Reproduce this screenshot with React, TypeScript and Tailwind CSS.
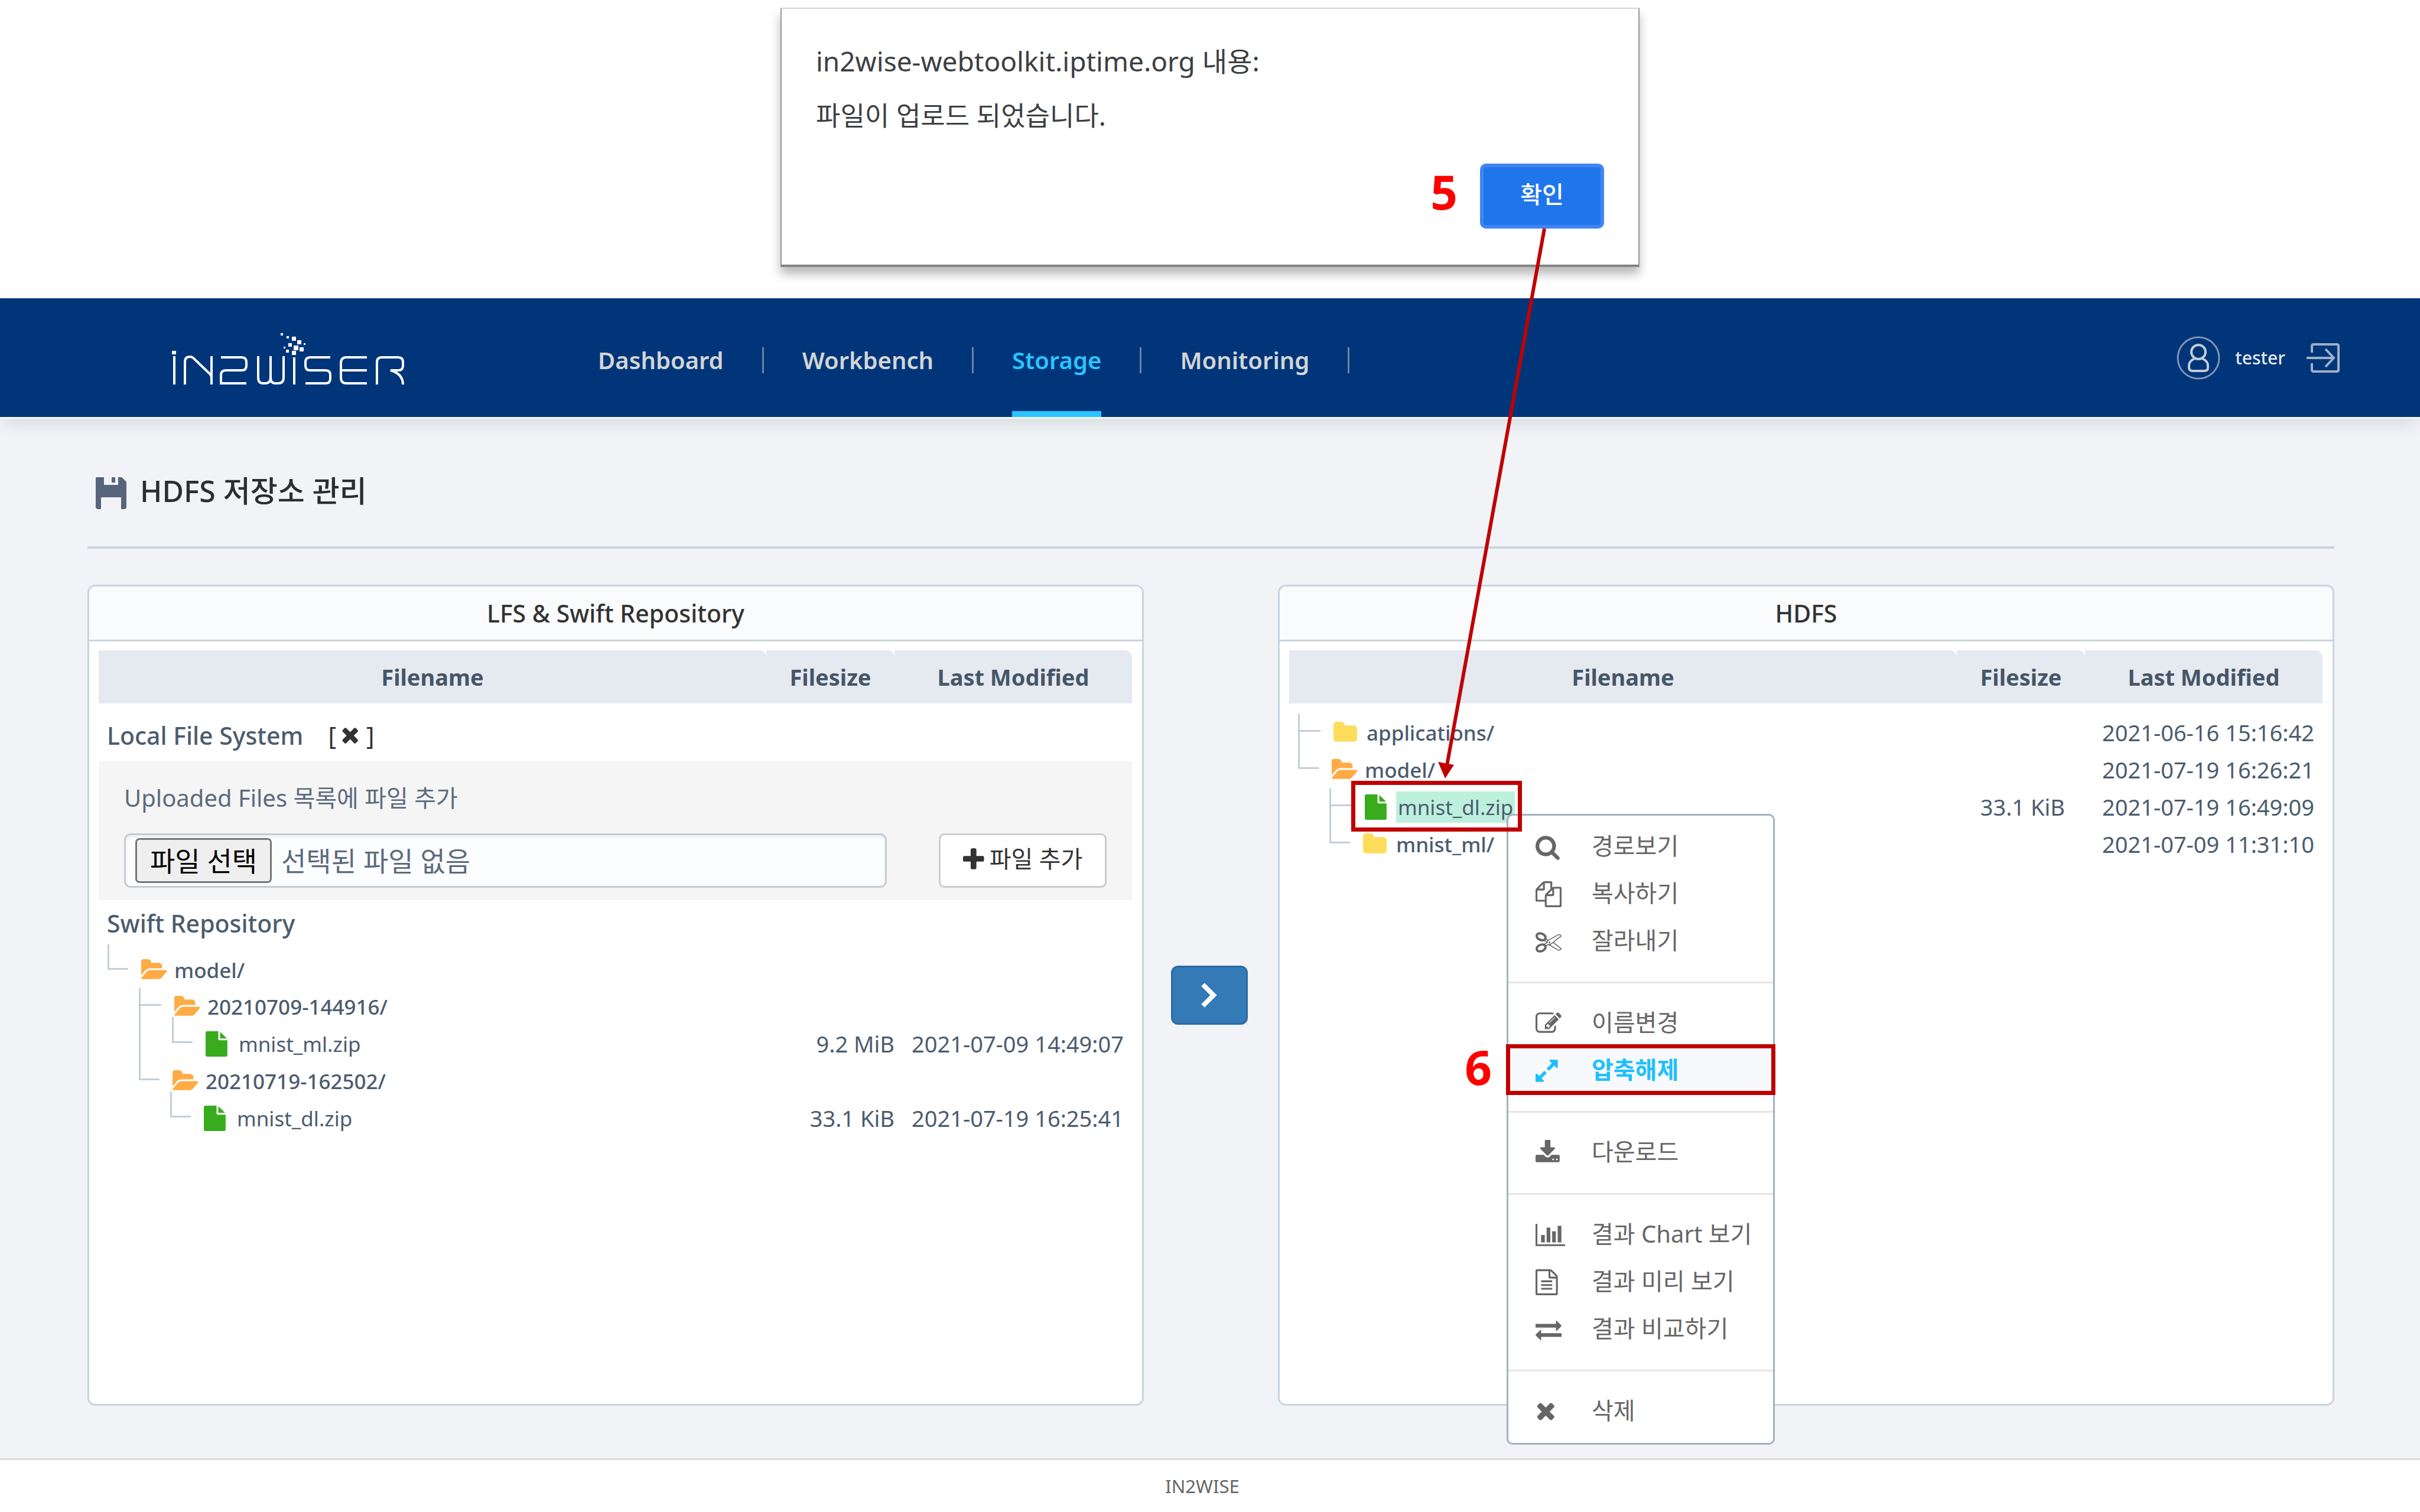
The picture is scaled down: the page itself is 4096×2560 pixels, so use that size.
import type { ReactNode } from 'react';

type Glyph = { d: string; box?: string };

const glyphs = {
  search: {
    d: 'M1216 832q0-185-131.5-316.5t-316.5-131.5-316.5 131.5-131.5 316.5 131.5 316.5 316.5 131.5 316.5-131.5 131.5-316.5zm512 832q0 52-38 90t-90 38q-54 0-90-38l-343-342q-179 124-399 124-143 0-273.5-55.5t-225-150-150-225-55.5-273.5 55.5-273.5 150-225 225-150 273.5-55.5 273.5 55.5 225 150 150 225 55.5 273.5q0 220-124 399l343 343q37 37 37 90z',
    box: '64 0 1792 1792',
  },
  copy: {
    d: 'M1696 384q40 0 68 28t28 68v1216q0 40-28 68t-68 28h-960q-40 0-68-28t-28-68v-288h-544q-40 0-68-28t-28-68v-672q0-40 20-88t48-76l408-408q28-28 76-48t88-20h416q40 0 68 28t28 68v328q68-40 128-40h416zm-544 213l-299 299h299v-299zm-640-384l-299 299h299v-299zm196 647l316-316v-416h-384v416q0 40-28 68t-68 28h-416v640h512v-256q0-40 20-88t48-76zm956 804v-1152h-384v416q0 40-28 68t-68 28h-416v640h896z',
  },
  cut: {
    d: 'M960 896q26 0 45 19t19 45-19 45-45 19-45-19-19-45 19-45 45-19zm300 64l507 398q28 20 25 56-5 35-35 51l-128 64q-13 7-29 7-17 0-31-8l-690-387-110 66q-8 4-12 5 14 49 10 97-7 77-56 147.5t-132 123.5q-132 84-277 84-136 0-222-78-90-84-79-207 7-76 56-147t131-124q132-84 278-84 83 0 151 31 9-13 22-22l122-73-122-73q-13-9-22-22-68 31-151 31-146 0-278-84-82-53-131-124t-56-147q-5-59 15.5-113t63.5-93q85-79 222-79 145 0 277 84 83 52 132 123t56 148q4 48-10 97 4 1 12 5l110 66 690-387q14-8 31-8 16 0 29 7l128 64q30 16 35 51 3 36-25 56zm-681-260q46-42 21-108t-106-117q-92-59-192-59-74 0-113 36-46 42-21 108t106 117q92 59 192 59 74 0 113-36zm-85 745q81-51 106-117t-21-108q-39-36-113-36-100 0-192 59-81 51-106 117t21 108q39 36 113 36 100 0 192-59zm178-613l96 58v-11q0-36 33-56l14-8-79-44-26 26q-3 3-10 11t-12 12q-2 2-4 3.5t-3 2.5zm224 224l96 32 736-576-128-64-768 431v113l-160 96 9 8q2 2 7 6 4 4 11 12t11 12l26 26zm704 416l128-64-520-408-177 138q-2 3-13 7z',
  },
  edit: {
    d: 'M888 1184l116-116-152-152-116 116v56h96v96h56zm440-720q-16-16-33 1l-350 350q-17 17-1 33t33-1l350-350q17-17 1-33zm80 594v190q0 119-84.5 203.5t-203.5 84.5h-832q-119 0-203.5-84.5t-84.5-203.5v-832q0-119 84.5-203.5t203.5-84.5h832q63 0 117 25 15 7 18 23 3 17-9 29l-49 49q-14 14-32 8-23-6-45-6h-832q-66 0-113 47t-47 113v832q0 66 47 113t113 47h832q66 0 113-47t47-113v-126q0-13 9-22l64-64q15-15 35-7t20 29zm-96-738l288 288-672 672h-288v-288zm444 132l-92 92-288-288 92-92q28-28 68-28t68 28l152 152q28 28 28 68t-28 68z',
  },
  expand: {
    d: 'M883 1056q0 13-10 23l-332 332 144 144q19 19 19 45t-19 45-45 19h-448q-26 0-45-19t-19-45v-448q0-26 19-45t45-19 45 19l144 144 332-332q10-10 23-10t23 10l114 114q10 10 10 23zm781-864v448q0 26-19 45t-45 19-45-19l-144-144-332 332q-10 10-23 10t-23-10l-114-114q-10-10-10-23t10-23l332-332-144-144q-19-19-19-45t19-45 45-19h448q26 0 45 19t19 45z',
    box: '128 0 1792 1792',
  },
  download: {
    d: 'M1344 1344q0-26-19-45t-45-19-45 19-19 45 19 45 45 19 45-19 19-45zm256 0q0-26-19-45t-45-19-45 19-19 45 19 45 45 19 45-19 19-45zm128-224v320q0 40-28 68t-68 28h-1472q-40 0-68-28t-28-68v-320q0-40 28-68t68-28h465l135 136q58 56 136 56t136-56l136-136h464q40 0 68 28t28 68zm-325-569q17 41-14 70l-448 448q-18 19-45 19t-45-19l-448-448q-31-29-14-70 17-39 59-39h256v-448q0-26 19-45t45-19h256q26 0 45 19t19 45v448h256q42 0 59 39z',
    box: '64 0 1792 1792',
  },
  chart: {
    d: 'M640 896v512h-256v-512h256zm384-512v1024h-256v-1024h256zm1024 1152v128h-2048v-1536h128v1408h1920zm-640-896v768h-256v-768h256zm384-384v1152h-256v-1152h256z',
    box: '0 0 2048 1792',
  },
  document: {
    d: 'M1596 380q28 28 48 76t20 88v1152q0 40-28 68t-68 28h-1344q-40 0-68-28t-28-68v-1600q0-40 28-68t68-28h896q40 0 88 20t76 48zm-444-244v376h376q-10-29-22-41l-313-313q-12-12-41-22zm384 1528v-1024h-416q-40 0-68-28t-28-68v-416h-768v1536h1280zm-1024-864q0-14 9-23t23-9h704q14 0 23 9t9 23v64q0 14-9 23t-23 9h-704q-14 0-23-9t-9-23v-64zm736 224q14 0 23 9t9 23v64q0 14-9 23t-23 9h-704q-14 0-23-9t-9-23v-64q0-14 9-23t23-9h704zm0 256q14 0 23 9t9 23v64q0 14-9 23t-23 9h-704q-14 0-23-9t-9-23v-64q0-14 9-23t23-9h704z',
    box: '128 0 1792 1792',
  },
  exchange: {
    d: 'M1792 1184v192q0 13-9.5 22.5t-22.5 9.5h-1376v192q0 13-9.5 22.5t-22.5 9.5q-12 0-24-10l-319-320q-9-9-9-22 0-14 9-23l320-320q9-9 23-9 13 0 22.5 9.5t9.5 22.5v192h1376q13 0 22.5 9.5t9.5 22.5zm0-544q0 14-9 23l-320 320q-9 9-23 9-13 0-22.5-9.5t-9.5-22.5v-192h-1376q-13 0-22.5-9.5t-9.5-22.5v-192q0-13 9.5-22.5t22.5-9.5h1376v-192q0-14 9-23t23-9q12 0 24 10l319 319q9 9 9 23z',
  },
  times: {
    d: 'M1490 1322q0 40-28 68l-136 136q-28 28-68 28t-68-28l-294-294-294 294q-28 28-68 28t-68-28l-136-136q-28-28-28-68t28-68l294-294-294-294q-28-28-28-68t28-68l136-136q28-28 68-28t68 28l294 294 294-294q28-28 68-28t68 28l136 136q28 28 28 68t-28 68l-294 294 294 294q28 28 28 68z',
    box: '192 64 1792 1792',
  },
  plus: {
    d: 'M1600 736v192q0 40-28 68t-68 28h-416v416q0 40-28 68t-68 28h-192q-40 0-68-28t-28-68v-416h-416q-40 0-68-28t-28-68v-192q0-40 28-68t68-28h416v-416q0-40 28-68t68-28h192q40 0 68 28t28 68v416h416q40 0 68 28t28 68z',
    box: '192 0 1408 1664',
  },
  folder: {
    d: 'M1728 608v704q0 92-66 158t-158 66h-1216q-92 0-158-66t-66-158v-960q0-92 66-158t158-66h320q92 0 158 66t66 158v32h672q92 0 158 66t66 158z',
    box: '64 0 1856 1792',
  },
  folderOpen: {
    d: 'M1815 952q0 31-31 66l-336 396q-43 51-120.5 86.5t-143.5 35.5h-1088q-34 0-60.5-13t-26.5-43q0-31 31-66l336-396q43-51 120.5-86.5t143.5-35.5h1088q34 0 60.5 13t26.5 43zm-343-344v160h-832q-94 0-197 47.5t-164 119.5l-337 396-5 6q0-4-.5-12.5t-.5-12.5v-960q0-92 66-158t158-66h320q92 0 158 66t66 158v32h544q92 0 158 66t66 158z',
    box: '0 0 1856 1792',
  },
  file: {
    d: 'M1152 512v-472q22 14 36 28l408 408q14 14 28 36h-472zm-128 32q0 40 28 68t68 28h544v1056q0 40-28 68t-68 28h-1344q-40 0-68-28t-28-68v-1600q0-40 28-68t68-28h800v544z',
    box: '128 0 1792 1792',
  },
} satisfies Record<string, Glyph>;

type GlyphName = keyof typeof glyphs;

function Icon({ name, className }: { name: GlyphName; className: string }) {
  const glyph: Glyph = glyphs[name];
  return (
    <svg aria-hidden="true" viewBox={glyph.box ?? '0 0 1792 1792'} fill="currentColor" preserveAspectRatio="xMinYMid meet" className={className}>
      <path d={glyph.d} />
    </svg>
  );
}

function Logo() {
  const dots = [
    [184, 1, 4], [194, 6, 4], [203, 7, 7], [212, 13, 7], [197, 18, 6], [223, 18, 3],
    [206, 22, 8], [216, 25, 7], [189, 24, 3], [193, 29, 5], [203, 31, 7],
  ];
  return (
    <svg role="img" aria-label="IN2WISER" viewBox="0 0 393 90" className="h-[90px] w-[393px] shrink-0">
      <g fill="none" stroke="#fff" strokeWidth="4">
        <path d="M4 40V88" />
        <path d="M22 88V50Q22 41 30 41Q35 41 38 45L62 68Q67 72 67 77M67 40V88" />
        <path d="M83 42H118Q126 42 126 50V56Q126 64 118 64H91Q83 64 83 72V86H126" />
        <path d="M146 40V76Q146 86 154 86H158Q167 86 167 76V40M167 76Q167 86 175 86H180Q189 86 189 76V40" />
        <path d="M207 42V88" />
        <path d="M268 42H234Q226 42 226 50V56Q226 64 234 64H260Q268 64 268 72V78Q268 86 260 86H226" />
        <path d="M330 42H295Q286 42 286 52V76Q286 86 295 86H330M286 64H330" />
        <path d="M347 88V50Q347 42 355 42H383Q391 42 391 50V56Q391 64 383 64H370Q391 70 391 88" />
      </g>
      <g fill="#fff">
        <rect x="0" y="31" width="7" height="6" />
        {dots.map(([x, y, s]) => (
          <rect key={`${x}-${y}`} x={x} y={y} width={s} height={s} />
        ))}
      </g>
    </svg>
  );
}

function UserIcon() {
  return (
    <svg aria-hidden="true" viewBox="0 0 74 74" fill="none" className="size-[74px]">
      <circle cx="37" cy="37" r="35" stroke="#8095b3" strokeWidth="3" />
      <g stroke="#c3ccd6" strokeWidth="4">
        <circle cx="37" cy="27" r="12" />
        <path d="M31 38Q21 42 21 50V53Q21 59 27 59H47Q53 59 53 53V50Q53 42 43 38" />
      </g>
    </svg>
  );
}

function LogoutIcon() {
  return (
    <svg aria-hidden="true" viewBox="0 0 56 50" fill="none" stroke="#9fb0c6" strokeWidth="4" className="h-[50px] w-[56px]">
      <path d="M9 16V5Q9 2 12 2H51Q54 2 54 5V45Q54 48 51 48H12Q9 48 9 45V34" />
      <path d="M0 25H45M32 10L46 25L32 40" />
    </svg>
  );
}

function SaveIcon() {
  return (
    <svg aria-hidden="true" viewBox="0 0 52 54" className="h-[54px] w-[52px]">
      <path fill="#57657c" d="M2 0H14V13H38V0H44L52 8V50Q52 54 48 54H43V34H9V54H4Q0 54 0 50V2Q0 0 2 0Z" />
      <rect x="27" y="0" width="6" height="9" fill="#57657c" />
    </svg>
  );
}

function Alert() {
  return (
    <section className="flex justify-center bg-white pt-[13px] pb-[53px]">
      <div
        role="alertdialog"
        aria-label="업로드 결과"
        className="flex w-[1454px] flex-col border-2 border-t-[#d5d5d5] border-r-[#9a9a9a] border-b-4 border-b-[#858585] border-l-[#9a9a9a] bg-white pt-[55px] pr-[58px] pb-[61px] pl-[58px] shadow-[0_12px_16px_rgba(0,0,0,0.28)]"
      >
        <h2 className="text-[46px] leading-[66px] text-[#3c4043]">in2wise-webtoolkit.iptime.org 내용:</h2>
        <p className="mt-[27px] text-[45px] leading-[66px] text-[#3c4043]">파일이 업로드 되었습니다.</p>
        <div className="mt-[48px] flex items-center justify-end gap-[38px]">
          <span className="pb-4 text-[80px] leading-[90px] font-bold text-[#ff0000]">5</span>
          <button type="button" className="h-[110px] w-[210px] rounded-[10px] border-[6px] border-[#4285f4] bg-[#1f76ea] pb-[6px] text-[40px] leading-[60px] font-medium text-white">
            확인
          </button>
        </div>
      </div>
    </section>
  );
}

function Header() {
  const items = ['Dashboard', 'Workbench', 'Storage', 'Monitoring'];
  return (
    <header className="relative flex h-[204px] items-stretch border-b-[3px] border-[#f7f7f8] bg-[#00357a] pr-[136px] pl-[291px] shadow-[0_14px_26px_-6px_rgba(60,80,70,0.14)]">
      <a href="#home" className="flex items-center pt-1">
        <Logo />
      </a>
      <nav className="ml-[328px] flex items-stretch">
        {items.map((item) => (
          <div key={item} className="flex items-stretch">
            <a
              href={`#${item.toLowerCase()}`}
              className={
                item === 'Storage'
                  ? 'flex items-center border-b-[10px] border-[#29c5ff] pt-[18px] text-[40px] leading-[60px] font-semibold text-[#29c5ff]'
                  : 'flex items-center pt-2 text-[40px] leading-[60px] font-semibold text-[#d3d5d4]'
              }
            >
              {item}
            </a>
            <span className="mx-[65px] mt-2 h-[44px] w-[3px] self-center bg-[#71819b]" />
          </div>
        ))}
      </nav>
      <div className="ml-auto flex items-center">
        <UserIcon />
        <span className="ml-[25px] text-[30px] leading-[48px] font-medium text-[#e4e8ec]">tester</span>
        <button type="button" aria-label="로그아웃" className="ml-[36px]">
          <LogoutIcon />
        </button>
      </div>
    </header>
  );
}

type Guide = 'elbow' | 'drop' | 'tee' | 'line' | 'blank';

const guideWidth: Record<Guide, string> = {
  elbow: 'w-[57px]',
  drop: 'w-[57px]',
  tee: 'w-[60px]',
  line: 'w-[56px]',
  blank: 'w-[53px]',
};

const guideStem: Record<Guide, string> = {
  elbow: 'h-[30px] w-[35px] border-b-[3px] border-l-[3px]',
  drop: '-mt-[14px] h-[44px] w-[35px] border-b-[3px] border-l-[3px]',
  tee: 'h-[30px] w-[38px] border-b-[3px] border-l-[3px]',
  line: 'h-full border-l-[3px]',
  blank: 'hidden',
};

function TreeGuide({ kind }: { kind: Guide }) {
  return (
    <span className={`flex shrink-0 flex-col ${guideWidth[kind]}`}>
      <span className={`shrink-0 border-[#c3ced9] ${guideStem[kind]}`} />
      {kind === 'tee' && <span className="flex-1 border-l-[3px] border-[#c3ced9]" />}
    </span>
  );
}

type Entry = {
  guides: Guide[];
  kind: 'folder' | 'folderOpen' | 'file';
  name: string;
  size?: string;
  modified?: string;
  menu?: boolean;
};

const kindColor = { folder: 'text-[#ffdc5c]', folderOpen: 'text-[#ffab45]', file: 'text-[#38ac1c]' };

function EntryRow({ entry, sizePad, first }: { entry: Entry; sizePad: string; first?: boolean }) {
  return (
    <tr className="text-[38px] leading-[63px] text-[#4b5c6e]">
      <td className="p-0">
        <div className={first ? 'flex h-[74px] pl-[15px]' : 'flex h-[63px] pl-[15px]'}>
          {first ? (
            <span className="w-[57px] shrink-0">
              <span className="block h-[43px] w-[35px] border-b-[3px] border-l-[3px] border-[#c3ced9]" />
            </span>
          ) : (
            entry.guides.map((g, i) => <TreeGuide key={i} kind={g} />)
          )}
          <span className={first ? 'flex items-center pt-3' : 'flex items-center'}>
            <Icon name={entry.kind} className={`h-[43px] w-[45px] shrink-0 ${kindColor[entry.kind]}`} />
            {entry.menu ? (
              <span className="relative ml-[8px] bg-[#bdf0dc] px-[3px] text-[35px] leading-[53px] whitespace-nowrap">
                {entry.name}
                <ContextMenu />
                <span className="pointer-events-none absolute -top-[18px] -right-[12px] -bottom-[15px] -left-[76px] border-[7px] border-[#c00000]" />
              </span>
            ) : (
              <span
                className={
                  entry.kind === 'file'
                    ? 'ml-[11px] text-[35px] whitespace-nowrap'
                    : 'ml-[11px] text-[35px] font-medium whitespace-nowrap'
                }
              >
                {entry.name}
              </span>
            )}
          </span>
        </div>
      </td>
      <td className={`p-0 text-right whitespace-nowrap ${sizePad}`}>{entry.size}</td>
      <td className="p-0 pr-[14px] text-right whitespace-nowrap">{entry.modified}</td>
    </tr>
  );
}

const menuGroups: { icon: GlyphName; label: string }[][] = [
  [
    { icon: 'search', label: '경로보기' },
    { icon: 'copy', label: '복사하기' },
    { icon: 'cut', label: '잘라내기' },
  ],
  [
    { icon: 'edit', label: '이름변경' },
    { icon: 'expand', label: '압축해제' },
  ],
  [{ icon: 'download', label: '다운로드' }],
  [
    { icon: 'chart', label: '결과 Chart 보기' },
    { icon: 'document', label: '결과 미리 보기' },
    { icon: 'exchange', label: '결과 비교하기' },
  ],
  [{ icon: 'times', label: '삭제' }],
];

function MenuItem({ icon, label }: { icon: GlyphName; label: string }) {
  const active = icon === 'expand';
  return (
    <li role="none" className="relative">
      <button
        type="button"
        role="menuitem"
        className={
          active
            ? 'flex h-[80px] w-full items-center bg-[#f8f9fc] pl-[46px] text-[40px] leading-[60px] font-bold text-[#1fbfff]'
            : 'flex h-[80px] w-full items-center pl-[46px] text-[40px] leading-[60px] text-[#666]'
        }
      >
        <span className="w-[95px] pt-[3px]">
          <Icon name={icon} className={icon === 'chart' ? 'h-[44px] w-[50px]' : 'size-[44px]'} />
        </span>
        {label}
      </button>
      {active && (
        <>
          <span className="pointer-events-none absolute -inset-x-[4px] -inset-y-[3px] border-[7px] border-[#c00000]" />
          <span className="absolute -top-[10px] right-full mr-[28px] text-[80px] leading-[90px] font-bold text-[#ff0000]">6</span>
        </>
      )}
    </li>
  );
}

function ContextMenu() {
  return (
    <div role="menu" className="absolute top-[38px] left-[187px] w-[454px] rounded-[10px] border-[3px] border-[#a5b1bf] bg-white pt-[11px] pb-[15px] text-left">
      {menuGroups.map((group, i) => (
        <ul key={group[0].label} role="group">
          {i > 0 && <li role="separator" className="mt-[30px] mb-[26px] h-[3px] bg-[#e5e5e5]" />}
          {group.map((item) => (
            <MenuItem key={item.label} {...item} />
          ))}
        </ul>
      ))}
    </div>
  );
}

function Panel({ title, children }: { title: string; children: ReactNode }) {
  return (
    <section className="min-w-0 flex-1 rounded-[13px] border-[3px] border-[#cad4df] bg-white">
      <h2 className="rounded-t-[10px] border-b-[3px] border-[#cad4df] bg-[#fafbfd] text-center text-[41px] leading-[90px] font-medium text-[#333]">{title}</h2>
      <div className="pt-[15px] pr-[17px] pl-[16px]">
        <table className="w-full table-fixed border-separate border-spacing-0">
          <colgroup>
            <col />
            <col className="w-[217px]" />
            <col className="w-[402px]" />
          </colgroup>
          <thead>
            <tr className="text-[38px] leading-[90px] text-[#455668]">
              <th className="rounded-tr-[12px] bg-[#e5e9f0] p-0 font-bold">Filename</th>
              <th className="rounded-tr-[12px] bg-[#e5e9f0] p-0 font-bold">Filesize</th>
              <th className="rounded-tr-[12px] bg-[#e5e9f0] p-0 font-bold">Last Modified</th>
            </tr>
          </thead>
          {children}
        </table>
      </div>
    </section>
  );
}

const swiftEntries: Entry[] = [
  { guides: ['elbow'], kind: 'folderOpen', name: 'model/' },
  { guides: ['blank', 'tee'], kind: 'folderOpen', name: '20210709-144916/' },
  { guides: ['blank', 'line', 'drop'], kind: 'file', name: 'mnist_ml.zip', size: '9.2 MiB', modified: '2021-07-09 14:49:07' },
  { guides: ['blank', 'elbow'], kind: 'folderOpen', name: '20210719-162502/' },
  { guides: ['blank', 'blank', 'drop'], kind: 'file', name: 'mnist_dl.zip', size: '33.1 KiB', modified: '2021-07-19 16:25:41' },
];

const hdfsEntries: Entry[] = [
  { guides: ['tee'], kind: 'folder', name: 'applications/', modified: '2021-06-16 15:16:42' },
  { guides: ['elbow'], kind: 'folderOpen', name: 'model/', modified: '2021-07-19 16:26:21' },
  { guides: ['blank', 'tee'], kind: 'file', name: 'mnist_dl.zip', size: '33.1 KiB', modified: '2021-07-19 16:49:09', menu: true },
  { guides: ['blank', 'elbow'], kind: 'folder', name: 'mnist_ml/', modified: '2021-07-09 11:31:10' },
];

function LocalPanel() {
  return (
    <Panel title="LFS & Swift Repository">
      <tbody>
        <tr>
          <td colSpan={3} className="p-0">
            <div className="flex h-[98px] items-center pt-[10px] pl-[14px] text-[41px] leading-[60px] text-[#4b5c6e]">
              <h3 className="font-medium">Local File System</h3>
              <button type="button" aria-label="닫기" className="ml-[42px] flex items-center text-[#333]">
                [<Icon name="times" className="mr-[3px] ml-[8px] h-[43px] w-[40px]" />]
              </button>
            </div>
            <div className="bg-[#f5f5f5] px-[43px] pt-[30px] pb-[21px] text-[#5c6b7e]">
              <p className="text-[40px] leading-[64px]">Uploaded Files 목록에 파일 추가</p>
              <div className="mt-[28px] flex gap-[88px]">
                <div className="flex h-[92px] flex-1 items-center rounded-[11px] border-[3px] border-[#c5cccf] bg-[#fcfdff] pl-[16px] shadow-[inset_0_4px_4px_rgba(0,0,0,0.06)]">
                  <input id="upload" type="file" className="sr-only" />
                  <label htmlFor="upload" className="flex items-center text-[46px] leading-[66px]">
                    <span className="flex h-[76px] w-[231px] items-center justify-center rounded-[7px] border-[3px] border-[#767676] bg-[#efefef] text-black">파일 선택</span>
                    <span className="ml-[16px]">선택된 파일 없음</span>
                  </label>
                </div>
                <button type="button" className="flex h-[92px] w-[284px] items-center justify-center gap-[9px] rounded-[9px] border-[3px] border-[#ccc] bg-white pb-[6px] text-[40px] leading-[60px] text-[#333]">
                  <Icon name="plus" className="h-[42px] w-[36px]" />
                  파일 추가
                </button>
              </div>
            </div>
            <h3 className="h-[75px] pt-[9px] pl-[14px] text-[41px] leading-[60px] font-medium text-[#4b5c6e]">Swift Repository</h3>
          </td>
        </tr>
        {swiftEntries.map((entry, i) => (
          <EntryRow key={entry.name} entry={entry} sizePad="pr-0" first={i === 0} />
        ))}
      </tbody>
    </Panel>
  );
}

function HdfsPanel() {
  return (
    <Panel title="HDFS">
      <tbody>
        <tr>
          <td colSpan={3} className="h-[18px] p-0" />
        </tr>
        {hdfsEntries.map((entry) => (
          <EntryRow key={entry.name} entry={entry} sizePad="pr-[34px]" />
        ))}
      </tbody>
    </Panel>
  );
}

export default function App() {
  return (
    <div className="relative flex min-h-screen flex-col bg-[#f1f3f7] font-['Noto_Sans','Noto_Sans_CJK_KR',sans-serif]">
      <Alert />
      <Header />
      <main className="flex flex-1 flex-col pt-[88px] pr-[145px] pb-[89px] pl-[148px]">
        <div className="flex h-[132px] items-start border-b-[4px] border-[#cad4df] pl-[14px]">
          <div className="flex h-[76px] items-center">
            <SaveIcon />
            <h1 className="ml-[23px] pb-2 text-[50px] leading-[68px] font-medium text-[#2d2d2d]">HDFS 저장소 관리</h1>
          </div>
        </div>
        <div className="mt-[61px] flex flex-1">
          <LocalPanel />
          <div className="flex w-[227px] items-center justify-center pr-[6px]">
            <button type="button" aria-label="HDFS로 복사" className="flex h-[100px] w-[130px] items-center justify-center rounded-[12px] border-[3px] border-[#2a6aa6] bg-[#337ab7]">
              <svg aria-hidden="true" viewBox="0 0 32 44" fill="none" stroke="#fff" strokeWidth="8" className="h-[44px] w-[32px]">
                <path d="M5 4L23 22L5 40" />
              </svg>
            </button>
          </div>
          <HdfsPanel />
        </div>
      </main>
      <footer className="h-[91px] border-t-[3px] border-[#ddd] bg-white pr-[26px] text-center text-[31px] leading-[88px] text-[#666]">IN2WISE</footer>
      <svg aria-hidden="true" viewBox="0 0 4096 2560" className="pointer-events-none absolute top-0 left-0 w-full">
        <path d="M2614 387L2449 1296" stroke="#c00000" strokeWidth="6" />
        <path d="M2446 1318L2434 1290L2461 1295Z" fill="#c00000" />
      </svg>
    </div>
  );
}
